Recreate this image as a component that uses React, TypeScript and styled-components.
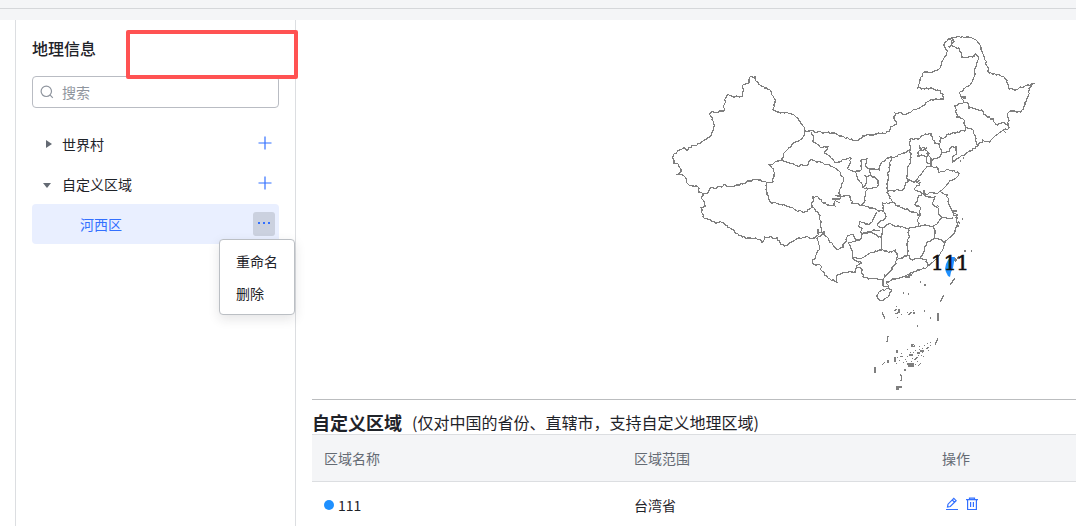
import React from "react";
import styled, { createGlobalStyle } from "styled-components";

const GlobalStyle = createGlobalStyle`
  * { box-sizing: border-box; }
  body {
    margin: 0;
    background: #fff;
    color: #1f2329;
    font: 14px/20px "Noto Sans CJK SC", sans-serif;
  }
  button, input { font: inherit; color: inherit; }
`;

const Page = styled.div`
  display: flex;
  flex-direction: column;
  height: 100vh;
  overflow: hidden;
`;

const TopBar = styled.header`
  flex: none;
  height: 9px;
  background: #f4f5f7;
  border-bottom: 1px solid #d5d7da;
`;

const Gap = styled.div`
  flex: none;
  height: 11px;
  background: #f4f5f7;
`;

const Body = styled.div`
  position: relative;
  display: flex;
  flex: 1;
  min-height: 0;
  padding-left: 15px;
`;

const Sidebar = styled.aside`
  flex: none;
  width: 281px;
  padding: 16px;
  border: solid #dcdee1;
  border-width: 0 1px;
`;

const SideTitle = styled.h1`
  margin: 0 0 16px;
  font-size: 16px;
  line-height: 24px;
  font-weight: 500;
`;

const SearchBox = styled.label`
  display: flex;
  align-items: center;
  gap: 8px;
  height: 32px;
  padding: 0 7px;
  border: 1px solid #b9bcc3;
  border-radius: 4px;
  color: #8f959e;
`;

const SearchInput = styled.input`
  flex: 1;
  min-width: 0;
  padding: 0;
  border: 0;
  outline: 0;
  background: none;
  &::placeholder { color: #8f959e; opacity: 1; }
`;

const Tree = styled.ul`
  margin: 16px 0 0;
  padding: 0;
  list-style: none;
`;

const TreeRow = styled.li<{ $active?: boolean }>`
  position: relative;
  display: flex;
  align-items: center;
  height: 40px;
  padding: ${(p) => (p.$active ? "0 4px 0 48px" : "0 2px 0 8px")};
  border-radius: 4px;
  background: ${(p) => (p.$active ? "#e9efff" : "transparent")};
  color: ${(p) => (p.$active ? "#3370ff" : "inherit")};
`;

const TreeLabel = styled.span`
  flex: 1;
`;

const IconButton = styled.button<{ $filled?: boolean }>`
  display: flex;
  align-items: center;
  justify-content: center;
  width: ${(p) => (p.$filled ? 22 : 24)}px;
  height: 24px;
  padding: 0 0 2px;
  border: 0;
  border-radius: 3px;
  background: ${(p) => (p.$filled ? "#cbd1df" : "none")};
  color: #3370ff;
`;

const Caret = styled.button`
  display: flex;
  width: 14px;
  height: 14px;
  margin-right: 8px;
  padding: 0;
  border: 0;
  background: none;
`;

const Menu = styled.div`
  position: absolute;
  top: 35px;
  right: -16px;
  z-index: 2;
  width: 76px;
  padding: 5px 0;
  border: 1px solid #bbbfc4;
  border-radius: 4px;
  background: #fff;
  box-shadow: 0 4px 12px rgba(31, 35, 41, 0.12);
`;

const MenuItem = styled.button`
  display: block;
  width: 100%;
  height: 32px;
  padding: 0 16px;
  border: 0;
  background: none;
  color: #1f2329;
  text-align: left;
`;

const Highlight = styled.div`
  position: absolute;
  top: 10px;
  left: 126px;
  width: 172px;
  height: 49px;
  border: 4px solid #ff5252;
  border-radius: 2px;
`;

const Main = styled.main`
  flex: 1;
  min-width: 0;
  padding-left: 16px;
`;

const MapPanel = styled.section`
  height: 380px;
  border-bottom: 1px solid #bbbdbf;
`;

const MapDrawing = styled.svg`
  display: block;
  width: 100%;
  height: 379px;
`;

const TableTitle = styled.h2`
  display: flex;
  align-items: center;
  gap: 10px;
  height: 34px;
  margin: 0;
  padding-top: 10px;
  font-size: 18px;
  line-height: 22px;
  font-weight: 700;
`;

const TitleNote = styled.small`
  font-size: 16px;
  font-weight: 400;
`;

const Table = styled.table`
  width: 100%;
  table-layout: fixed;
  border-collapse: separate;
  border-spacing: 0;
`;

const HeadCell = styled.th<{ $width?: string }>`
  width: ${(p) => p.$width ?? "auto"};
  height: 48px;
  padding: 0 12px;
  border: solid #dcdee1;
  border-width: 1px 0;
  background: #f4f5f7;
  color: #646a73;
  font-weight: 400;
  text-align: left;
`;

const Cell = styled.td`
  height: 48px;
  padding: 0 12px 2px;
  border-bottom: 1px solid #dcdee1;
`;

const Name = styled.div`
  display: flex;
  align-items: center;
  gap: 4px;
`;

const Dot = styled.span`
  width: 10px;
  height: 10px;
  border-radius: 50%;
  background: #1e90ff;
`;

const Actions = styled.div`
  display: flex;
  gap: 6px;
  padding: 0 0 2px 3px;
`;

const ActionButton = styled.button`
  display: flex;
  padding: 0;
  border: 0;
  background: none;
  color: #3370ff;
`;

/* Province borders and coast lines, as x,y pairs in map units. */
const borders: string[] = [
  "805,131 803,126 800,121 795,116 788,113 777,112 773,110 775,103 774,98 770,90 760,85 756,81 755,77 750,77 749,83 743,85 743,94 740,97 732,96 728,94 726,98 724,105 724,111 710,113 712,120 714,127 712,132 710,137 703,141 697,145 692,145 688,150 683,148 677,152 672,157 674,163 678,164 681,172 678,174 685,177 687,183 693,186 698,187 699,192 703,194",
  "703,194 708,193 710,188 722,187 725,184 728,187 735,186 743,184 747,181 757,179 766,182 773,182 773,178 775,173 772,168 769,165 775,162 782,160 784,153 788,149 795,142 803,137 805,131",
  "703,194 702,199 706,206 701,208 703,217 717,223 720,221 730,228 742,237 750,238 760,239 762,243 765,237 777,238 781,245 788,245 795,240 803,237 808,237 812,239 818,235 821,232",
  "766,182 767,193 770,202 782,205 793,208 803,213 812,207 813,197 818,197 823,203 835,206 835,201 841,197 838,193 841,188 844,181 840,172 833,167 823,163 815,161 811,159 807,166 795,165 782,160",
  "812,207 818,212 821,223 822,235 817,238 819,242 819,250 812,262 815,265 820,265 822,271 828,278 837,282 837,275 845,272 855,272 856,268 862,269 863,277 873,279 883,280",
  "805,131 832,133 842,136 855,141 865,136 875,134 886,133 893,126 897,124 894,118 895,113 900,112 905,115 912,111 920,108 927,102 935,99 943,99 943,94 938,90 932,88 925,89 918,88 920,80 924,72 930,73 940,68 943,60 948,51 944,45 948,39 957,37 968,37 977,41 981,47 985,60 989,73 1000,75 1007,80 1008,88 1015,90 1028,85 1033,84 1029,88 1028,97 1025,105 1021,112 1013,111 1008,113 1009,128 1002,131 993,138 990,142 983,140 978,146 968,152 960,157 953,161 952,158 957,152 956,147 953,146 947,152 942,153 938,158 932,160 931,166 938,168 939,173 946,170 952,171 959,173 958,176 952,180 940,191 947,195 948,202 953,212 957,218 958,224 955,232 947,240 943,249 940,254 933,262 927,267 920,270 907,275 895,279 887,282 888,287 884,287 883,280",
  "948,39 953,39 954,42 951,46 948,46",
  "953,39 952,46 959,48 962,57 972,57 976,54 979,59 976,67 974,77 970,85 965,88 959,93 963,100 963,103 955,106 957,117 963,119 966,127 965,131 957,132 948,134 943,139 940,137 940,148 942,153",
  "963,103 968,103 969,108 982,110 987,117 993,119 995,123 998,125 1003,122 1009,126",
  "966,127 972,129 974,134 976,138 978,146",
  "940,144 935,143 931,134 925,134 919,139 910,139 909,143 911,146 910,150 903,153 895,157 887,158 882,162 879,170 870,169 866,167 867,159 861,160 861,170 855,172 847,168 851,162 850,157 837,163 831,158 824,153 828,147 820,147 813,142 812,132",
  "855,172 860,182 863,187 867,182 865,176 871,175 870,169",
  "871,175 878,180 877,187 868,189 863,187",
  "868,189 865,192 865,200 862,205 872,208 883,212 883,203 892,203",
  "835,195 840,196 850,196 852,203 862,205",
  "917,157 919,151 923,147 928,152 927,157 921,155 917,157",
  "925,156 927,163 931,163 930,157 928,152",
  "892,157 889,167 888,180 887,192 896,190 903,190 908,180 907,176 909,165 911,158 910,150",
  "908,180 915,182 920,183 914,189 922,193 937,194 940,191",
  "931,166 926,168 922,173 918,178 915,182",
  "887,192 890,196 892,201 897,206 903,208 913,212 920,215 920,207 915,205 918,197 922,193",
  "923,193 928,197 935,197 933,205 938,208 938,213 942,217 953,218",
  "942,217 939,221 933,227 925,225 920,227 918,222 920,215",
  "933,227 935,232 935,238 945,242",
  "935,238 927,242 923,253 920,258 912,260 908,255 897,260 892,270 883,280",
  "920,227 908,229 900,227 888,224 882,228 877,225 886,217 884,212 883,207",
  "908,229 909,238 907,243 908,255",
  "882,228 881,250 892,252 895,250 897,255 897,260",
  "877,212 872,222 867,224 860,221 858,226 862,228 860,232 867,234 872,231 880,230",
  "821,232 827,237 833,245 838,250 843,247 847,237 851,234 857,240 860,240 862,234 867,232 872,232 878,237 881,237",
  "860,240 853,241 848,243 852,250 853,258 862,258 870,253 881,250",
  "853,258 858,262 862,263 856,267",
  "888,288 892,290 888,297 882,301 877,297 879,292 888,288",
  "920,258 927,260 927,267",
  "919,145 921,151 927,148",
];

/* Reefs, islets and the dashed sea boundary. */
const strokes =
  "M882 312l3 7M888 336l-1 6M875 367v6M944 295l-4 7M938 313v8M938 338l-3 7M955 278l-5 7M955 262l4-6M896 387h6M899 389h-3M900 374l2 3-1 4M907 364h7M908 366h6M914 360l4-3M918 366l3-3M895 357v5M882 365l3-3M888 360v3M926 349l3-2M920 351h4M911 347l4-1M912 344v3M897 350v3M900 356l3 1M917 353h3M909 355h4M894 311l3-2M895 314l5-2M899 309v4M908 315l4-3M913 313h2M903 293h1M908 294h1M924 311h1M930 318h1M917 326h1M904 370h2M920 282h1M924 285h2M955 258v3M958 221l2 3M954 213l4 2-3 3M956 226h3M952 211h5M964 251h2M971 251h1M962 219h1M905 277h5M908 275h4M884 274l2 3M963 98h3M962 97h4M1003 130l3 3M937 205l2 2M916 183l4-3M924 190v4M952 162h1M960 161h1M963 158h1M832 199h8M836 201l4 2M818 229v5M824 231v4";

const islets: number[][] = [
  [896, 306], [901, 314], [897, 317], [907, 312], [913, 310], [907, 349], [910, 352],
  [915, 350], [922, 348], [924, 345], [919, 346], [927, 343], [930, 345], [928, 350],
  [921, 355], [916, 357], [913, 352], [905, 359], [899, 360], [903, 362], [906, 361],
  [911, 361], [917, 361], [915, 364], [912, 358], [897, 357], [923, 356], [919, 349],
  [907, 356], [901, 353], [918, 355], [922, 352], [896, 363], [913, 344], [930, 342],
];

/* Roughens a coarse line by pushing points along each segment sideways. */
function roughen(points: string): string {
  const pts = points.split(" ").map((p) => p.split(",").map(Number));
  let out = `M${pts[0][0]} ${pts[0][1]}`;
  for (let i = 1; i < pts.length; i++) {
    const [ax, ay] = pts[i - 1];
    const [bx, by] = pts[i];
    const length = Math.hypot(bx - ax, by - ay) || 1;
    const steps = Math.max(1, Math.round(length / 2));
    for (let s = 1; s < steps; s++) {
      const t = s / steps;
      const seed = Math.sin(ax * 12.9 + by * 78.2 + s * 37.7) * 43758.5;
      const push = (seed - Math.floor(seed) - 0.5) * 2;
      const x = ax + (bx - ax) * t - ((by - ay) / length) * push;
      const y = ay + (by - ay) * t + ((bx - ax) / length) * push;
      out += `L${x.toFixed(1)} ${y.toFixed(1)}`;
    }
    out += `L${bx} ${by}`;
  }
  return out;
}

const borderPath = borders.map(roughen).join("");

function ChinaMap() {
  return (
    <MapDrawing viewBox="312 20 764 379" role="img" aria-label="中国地图">
      <g fill="none" stroke="#7f7f7f" strokeWidth="1.2" shapeRendering="crispEdges">
        <path d={borderPath} />
        <path d={strokes} />
      </g>
      <g fill="#7f7f7f" shapeRendering="crispEdges">
        {islets.map(([x, y]) => (
          <rect key={`${x}-${y}`} x={x} y={y} width="1" height="1" />
        ))}
      </g>
      <path
        d="M951 257l4 0-1 5-1 6-2 4-1 5-2-1-2-4-1-3 1-5 2-4z"
        fill="#1e90ff"
      />
      <text
        x="950"
        y="270"
        textAnchor="middle"
        fontFamily="DejaVu Serif, serif"
        fontSize="20"
        fill="#111"
        stroke="#111"
        strokeWidth="0.6"
      >
        111
      </text>
    </MapDrawing>
  );
}

const Plus = () => (
  <svg width="14" height="14" viewBox="0 0 14 14" stroke="currentColor" strokeWidth="1.2">
    <path d="M7 .5v13M.5 7h13" />
  </svg>
);

const CaretIcon = ({ open }: { open?: boolean }) => (
  <svg width="14" height="14" viewBox="0 0 14 14" fill="#646a73">
    <path d={open ? "M3 6h8l-4 5z" : "M6 3l6 4-6 4z"} />
  </svg>
);

export default function App() {
  return (
    <>
      <GlobalStyle />
      <Page>
        <TopBar />
        <Gap />
        <Body>
          <Sidebar>
            <SideTitle>地理信息</SideTitle>
            <SearchBox>
              <svg width="14" height="14" viewBox="0 0 14 14" fill="none" stroke="currentColor" strokeWidth="1.2">
                <circle cx="6.3" cy="6.3" r="5.2" />
                <path d="M10.2 10.2l2.600 2.600" />
              </svg>
              <SearchInput type="text" placeholder="搜索" aria-label="搜索" />
            </SearchBox>
            <Tree>
              <TreeRow>
                <Caret aria-label="展开"><CaretIcon /></Caret>
                <TreeLabel>世界村</TreeLabel>
                <IconButton aria-label="添加"><Plus /></IconButton>
              </TreeRow>
              <TreeRow>
                <Caret aria-label="收起"><CaretIcon open /></Caret>
                <TreeLabel>自定义区域</TreeLabel>
                <IconButton aria-label="添加"><Plus /></IconButton>
              </TreeRow>
              <TreeRow $active>
                <TreeLabel>河西区</TreeLabel>
                <IconButton $filled aria-label="更多">
                  <svg width="14" height="4" viewBox="0 0 14 4" fill="currentColor">
                    <path d="M1 1h2v2H1zM6 1h2v2H6zM11 1h2v2h-2z" />
                  </svg>
                </IconButton>
                <Menu>
                  <MenuItem>重命名</MenuItem>
                  <MenuItem>删除</MenuItem>
                </Menu>
              </TreeRow>
            </Tree>
          </Sidebar>
          <Main>
            <MapPanel>
              <ChinaMap />
            </MapPanel>
            <TableTitle>
              自定义区域
              <TitleNote>(仅对中国的省份、直辖市，支持自定义地理区域)</TitleNote>
            </TableTitle>
            <Table>
              <thead>
                <tr>
                  <HeadCell $width="310px">区域名称</HeadCell>
                  <HeadCell>区域范围</HeadCell>
                  <HeadCell $width="146px">操作</HeadCell>
                </tr>
              </thead>
              <tbody>
                <tr>
                  <Cell><Name><Dot />111</Name></Cell>
                  <Cell>台湾省</Cell>
                  <Cell>
                    <Actions>
                      <ActionButton aria-label="编辑">
                        <svg width="14" height="14" viewBox="0 0 14 14" fill="none" stroke="currentColor" strokeWidth="1.2">
                          <path d="M1 12.5h12M2.5 10l.5-2.800L8.800 1.400l2.300 2.300L5.300 9.500zM7.300 3l2.300 2.300" />
                        </svg>
                      </ActionButton>
                      <ActionButton aria-label="删除">
                        <svg width="14" height="14" viewBox="0 0 14 14" fill="none" stroke="currentColor" strokeWidth="1.2">
                          <path d="M1 2.600h12M4.500 2.600V1.200h5v1.400M2.600 2.600v9.900h8.800V2.600M5.600 5v5M8.400 5v5" />
                        </svg>
                      </ActionButton>
                    </Actions>
                  </Cell>
                </tr>
              </tbody>
            </Table>
          </Main>
          <Highlight />
        </Body>
      </Page>
    </>
  );
}
